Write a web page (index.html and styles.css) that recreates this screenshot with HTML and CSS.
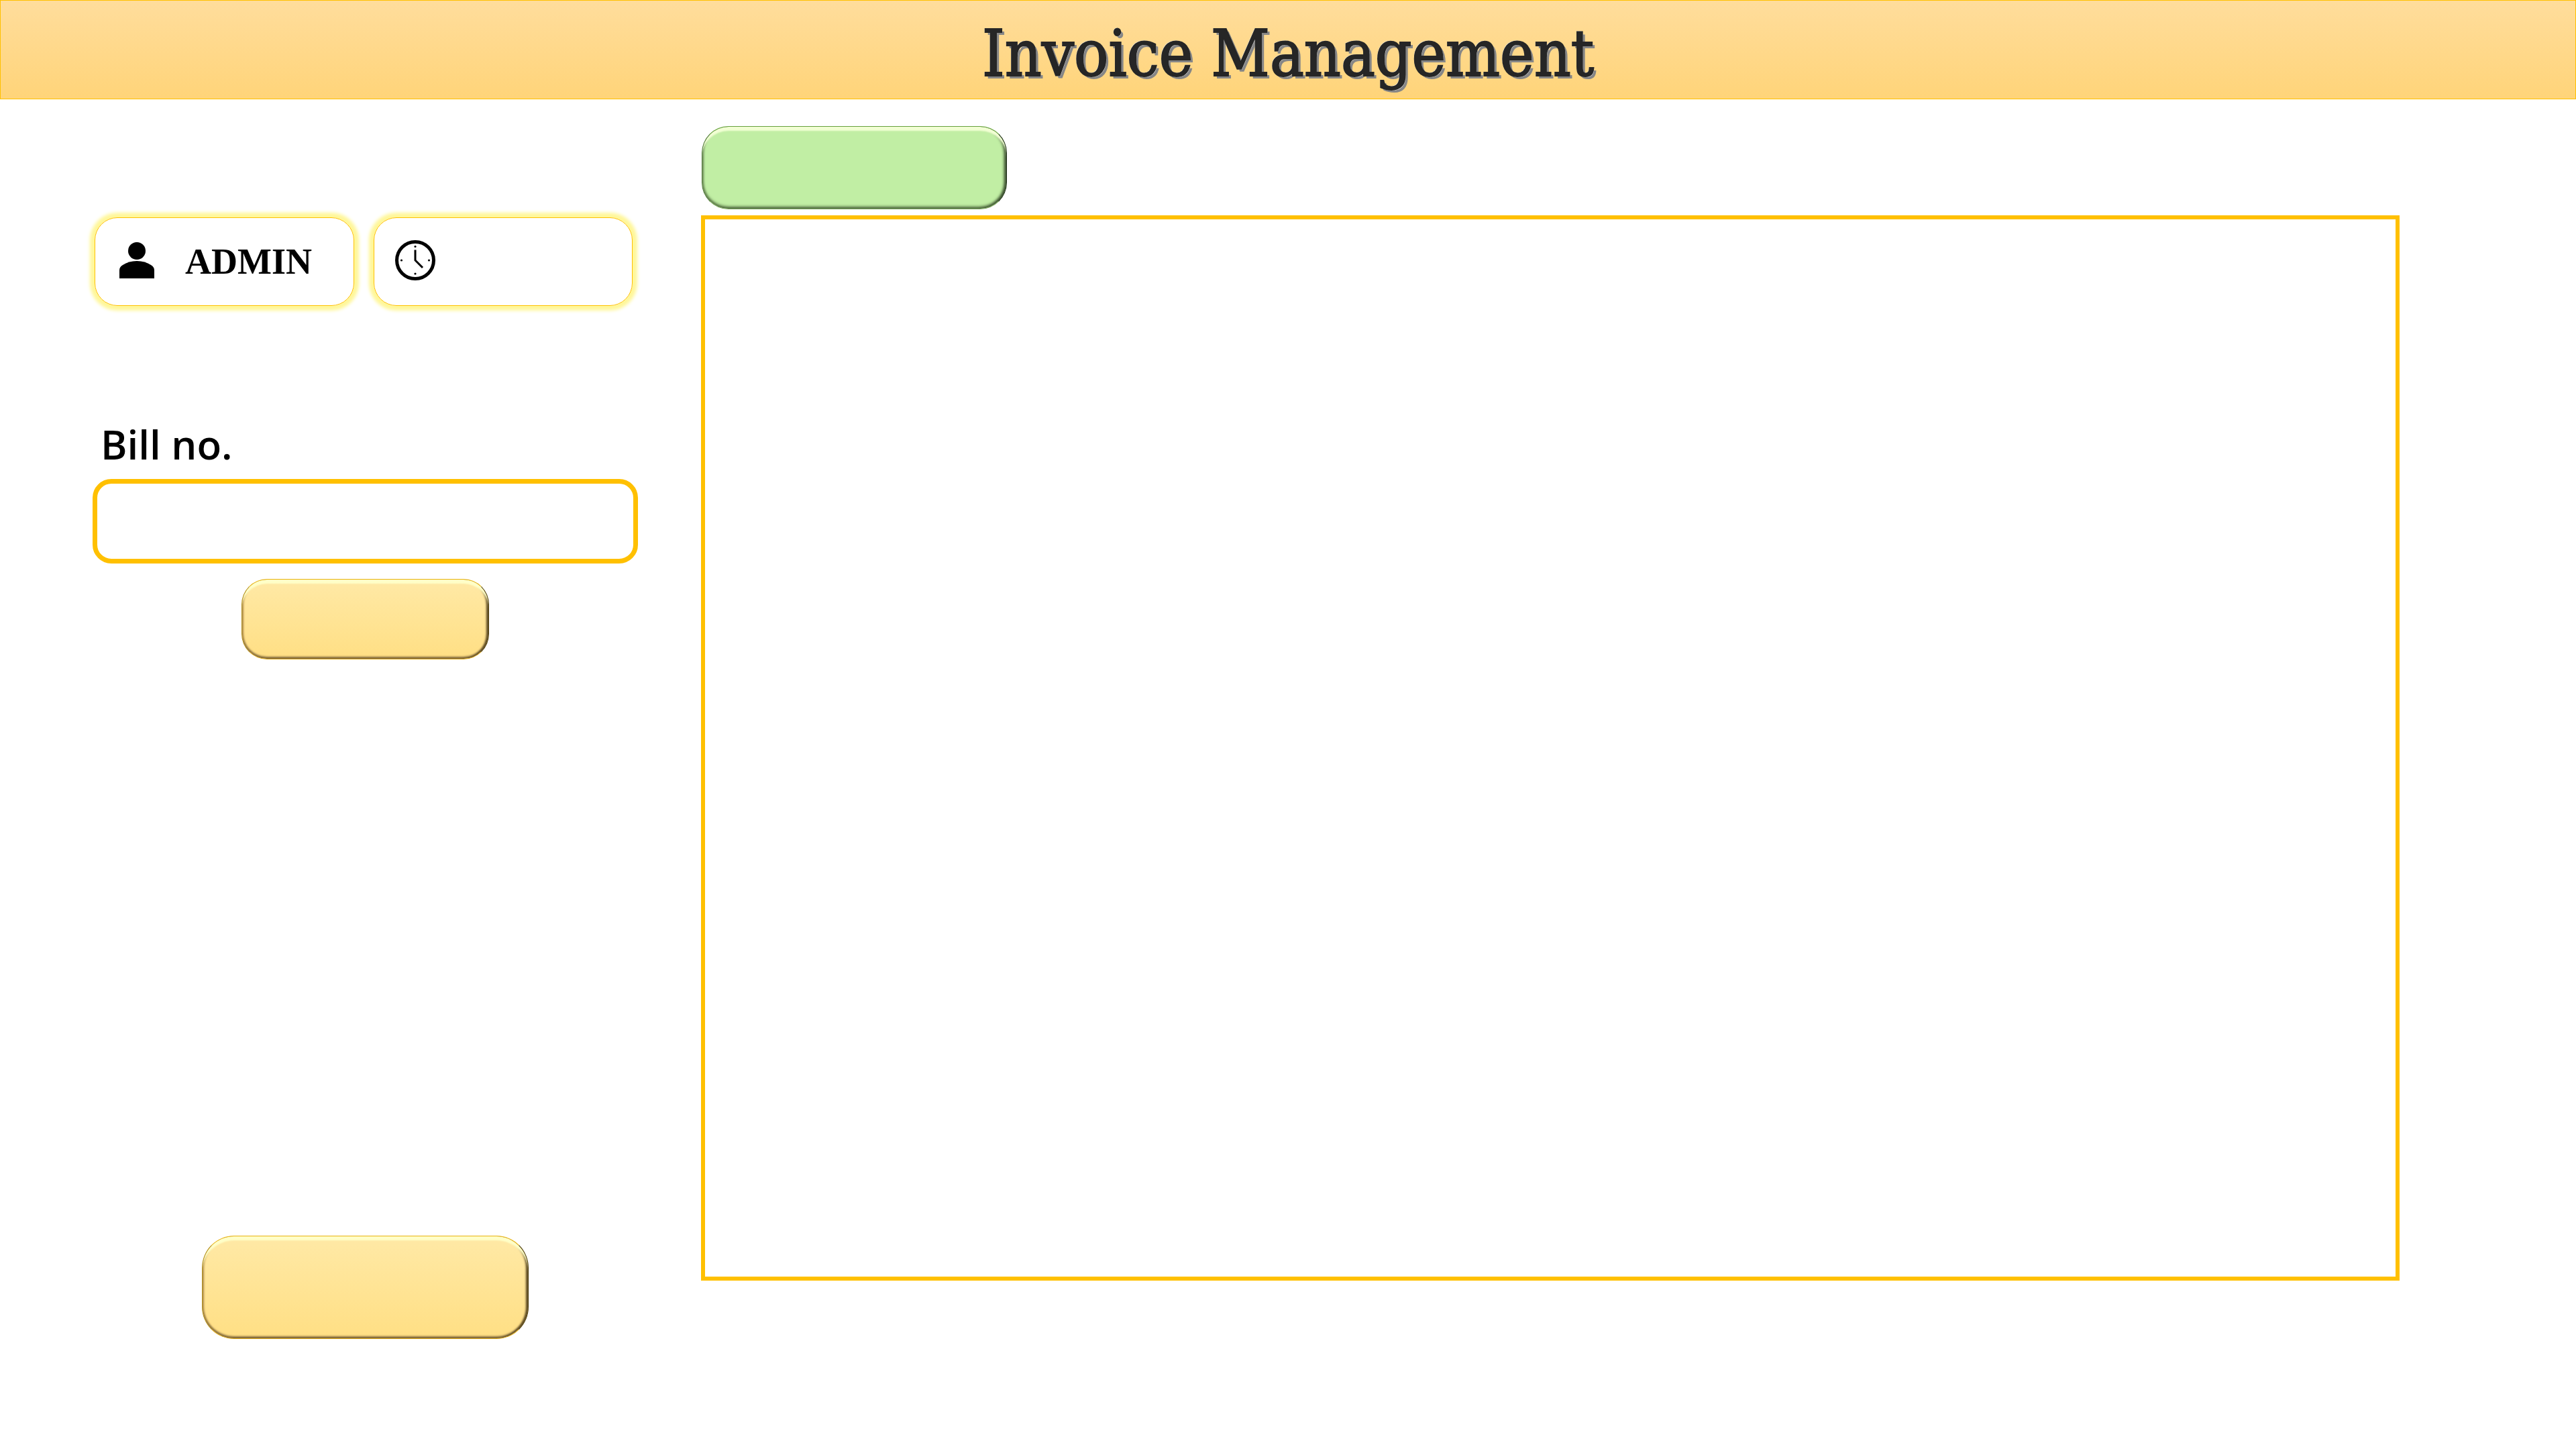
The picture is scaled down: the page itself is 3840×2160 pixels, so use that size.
FILE: index.html
```html
<!DOCTYPE html>
<html lang="en">
<head>
<meta charset="utf-8">
<title>Invoice Management</title>
<link rel="stylesheet" href="styles.css">
</head>
<body>
<div class="page">
  <header class="banner">
    <h1 class="banner-title">Invoice Management</h1>
  </header>
  <div class="layout">
    <aside class="sidebar">
      <div class="status">
        <div class="chip">
          <svg class="icon icon-user" viewBox="0 0 52 54" aria-hidden="true">
            <circle cx="26" cy="13" r="13"/>
            <path d="M0 54V42C0 38 2 36 5 34C11 30 18 28 26 28S41 30 47 34C50 36 52 38 52 42V54Z"/>
          </svg>
          <span class="chip-text">ADMIN</span>
        </div>
        <div class="chip">
          <svg class="icon icon-clock" viewBox="0 0 60 60" aria-hidden="true">
            <circle cx="30" cy="30" r="27.5" fill="none" stroke="#000" stroke-width="5"/>
            <path d="M30 14.5V30L41 41" fill="none" stroke="#000" stroke-width="3"/>
            <circle cx="30" cy="9.5" r="1.6"/>
            <circle cx="50.5" cy="30" r="1.6"/>
            <circle cx="30" cy="50" r="1.6"/>
            <circle cx="9.5" cy="30" r="1.6"/>
          </svg>
        </div>
      </div>
      <form class="search">
        <label class="search-label" for="bill">Bill no.</label>
        <input class="search-input" id="bill" type="text">
        <button class="bevel bevel-amber search-button" type="button" aria-label="Search"></button>
      </form>
      <button class="bevel bevel-amber logout-button" type="button" aria-label="Logout"></button>
    </aside>
    <main class="content">
      <button class="bevel bevel-green add-button" type="button" aria-label="Add invoice"></button>
      <section class="panel" aria-label="Invoices"></section>
    </main>
  </div>
</div>
</body>
</html>
```
FILE: styles.css
```css
* {
  box-sizing: border-box;
}

body {
  margin: 0;
  background: #fff;
  color: #000;
}

.page {
  display: flex;
  flex-direction: column;
  min-height: 100vh;
}

.banner {
  display: flex;
  justify-content: center;
  height: 148px;
  border: 1px solid #ffc000;
  background: linear-gradient(#ffdd9c, #ffd479);
}

.banner-title {
  margin: 0;
  font-family: "DejaVu Serif Condensed", "DejaVu Serif", serif;
  font-size: 95px;
  font-weight: 400;
  line-height: 158px;
  color: #262626;
  -webkit-text-stroke: 2px #262626;
  text-shadow: -1px -1px 0 #f4f4f4, 1px 1px 0 #f4f4f4, 4px 4px 0 #868686;
}

.layout {
  flex: 1;
  display: grid;
  grid-template-columns: 813px 1fr;
  gap: 94px;
  padding: 40px 263px 162px 138px;
}

.sidebar {
  display: flex;
  flex-direction: column;
  align-items: center;
  padding-top: 136px;
}

.status {
  display: grid;
  grid-template-columns: 1fr 1fr;
  gap: 29px;
  align-self: stretch;
  padding: 0 8px 0 3px;
}

.chip {
  display: flex;
  align-items: center;
  gap: 46px;
  height: 132px;
  padding: 0 32px 4px 36px;
  border: 1px solid #ffc000;
  border-radius: 34px;
  box-shadow: 0 0 5px 7px #fff799;
}

.chip-text {
  padding-top: 4px;
  font-family: "Liberation Serif", serif;
  font-size: 54px;
  font-weight: 700;
  line-height: 60px;
}

.icon {
  display: block;
  flex: none;
}

.icon-user {
  width: 52px;
  height: 54px;
}

.icon-clock {
  width: 60px;
  height: 60px;
  margin-left: -5px;
}

.search {
  display: flex;
  flex-direction: column;
  align-items: center;
  align-self: stretch;
  padding-top: 166px;
}

.search-label {
  align-self: flex-start;
  padding-left: 12px;
  font-family: "Open Sans", "Noto Sans", sans-serif;
  font-size: 60px;
  font-weight: 600;
  line-height: 80px;
}

.search-input {
  width: 100%;
  height: 126px;
  margin-top: 12px;
  padding: 0 32px;
  border: 7px solid #ffc000;
  border-radius: 28px;
  background: #fff;
  font-family: "Open Sans", "Noto Sans", sans-serif;
  font-size: 54px;
  outline: none;
}

.bevel {
  padding: 0;
  border: 1px solid;
}

.bevel-amber {
  border-color: #e8b210 #4a3a08 #e0ac1c #b08a14;
  background: linear-gradient(#ffe9a6, #ffdf84);
  box-shadow:
    inset 0 7px 2px -1px #ffffc8,
    inset -3px 0 3px #5c4a22,
    inset 0 -3px 3px #8a7140,
    inset 2px 0 3px #c09a50;
}

.bevel-green {
  border-color: #66a03c #1c2c14 #7ea860 #50783a;
  background: #c1eea4;
  box-shadow:
    inset 0 7px 2px -1px #f2ffd4,
    inset -3px 0 4px #34482a,
    inset 0 -3px 4px #62804e,
    inset 2px 0 3px #7c9e66;
}

.search-button {
  width: 369px;
  height: 120px;
  margin-top: 23px;
  border-radius: 38px;
}

.logout-button {
  width: 487px;
  height: 154px;
  margin: auto 0 2px;
  border-radius: 48px;
}

.content {
  display: flex;
  flex-direction: column;
  gap: 9px;
  padding-bottom: 89px;
}

.add-button {
  width: 455px;
  height: 124px;
  margin-left: 1px;
  border-radius: 40px;
}

.panel {
  flex: 1;
  border: 6px solid #ffc000;
}
```
